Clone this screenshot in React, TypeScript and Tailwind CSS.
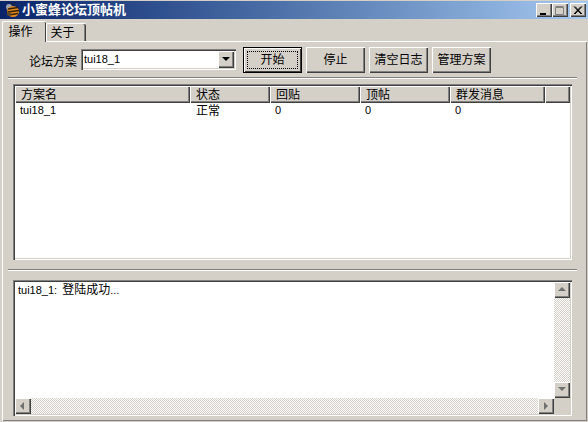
const FONT = "font-['Liberation_Sans','Noto_Sans_CJK_SC',sans-serif]";
const RAISED =
  "shadow-[inset_1px_1px_0_#ffffff,inset_-1px_-1px_0_#404040,inset_-2px_-2px_0_#808080]";
const SUNKEN =
  "shadow-[inset_1px_1px_0_#808080,inset_2px_2px_0_#404040,inset_-1px_-1px_0_#ffffff,inset_-2px_-2px_0_#d4d0c8]";
const CHECKER =
  "bg-[repeating-conic-gradient(#d4d0c8_0_25%,#ffffff_0_50%)] bg-[length:2px_2px]";

const COLUMNS = [
  { label: "方案名", width: "w-[175px]", value: "tui18_1", latin: true },
  { label: "状态", width: "w-[80px]", value: "正常", latin: false },
  { label: "回贴", width: "w-[90px]", value: "0", latin: true },
  { label: "顶帖", width: "w-[90px]", value: "0", latin: true },
  { label: "群发消息", width: "w-[95px]", value: "0", latin: true },
];

function BeeIcon() {
  return (
    <svg width="16" height="16" viewBox="0 0 16 16" className="shrink-0">
      <circle cx="5" cy="5" r="3" fill="#9aa0ac" />
      <ellipse cx="9" cy="9.5" rx="6" ry="5.5" fill="#e08a1e" />
      <path d="M4 7 L14 5.5 M3.5 10 L15 8.5 M4.5 13 L14 11.5" stroke="#3a2208" strokeWidth="1.5" />
      <circle cx="5" cy="12" r="2" fill="#5a4a30" />
      <path d="M7 0.5 L8 3 M11 0.5 L10 3" stroke="#222222" strokeWidth="1" />
    </svg>
  );
}

function CaptionButton({ kind, className }: { kind: "min" | "max" | "close"; className: string }) {
  return (
    <div className={`flex h-[14px] w-[16px] items-center justify-center bg-[#d4d0c8] ${RAISED} ${className}`}>
      <svg width="10" height="9" viewBox="0 0 10 9">
        {kind === "min" && <rect x="1" y="7" width="6" height="2" fill="#000000" />}
        {kind === "max" && (
          <path d="M0.5 1.5 H8.5 V8.5 H0.5 Z M0.5 0.5 H8.5" fill="none" stroke="#808080" />
        )}
        {kind === "close" && <path d="M1 0.5 L8 8 M2 0.5 L9 8 M8 0.5 L1 8 M9 0.5 L2 8" stroke="#000000" />}
      </svg>
    </div>
  );
}

function Button({ label, isDefault }: { label: string; isDefault?: boolean }) {
  if (isDefault) {
    return (
      <button className="flex h-[26px] w-[59px] items-center justify-center bg-[#d4d0c8] text-xs text-black shadow-[inset_0_0_0_1px_#000000,inset_2px_2px_0_#ffffff,inset_-2px_-2px_0_#404040]">
        <span className="flex h-[18px] w-[51px] items-center justify-center border border-dotted border-black">
          {label}
        </span>
      </button>
    );
  }
  return (
    <button className={`flex h-[26px] w-[59px] items-center justify-center bg-[#d4d0c8] text-xs text-black ${RAISED}`}>
      {label}
    </button>
  );
}

function ScrollButton({ dir }: { dir: "up" | "down" | "left" | "right" }) {
  const points = {
    up: "1,6 9,6 5,2",
    down: "1,2 9,2 5,6",
    left: "6,1 6,9 2,5",
    right: "3,1 3,9 7,5",
  }[dir];
  return (
    <div className={`flex h-[16px] w-[16px] shrink-0 items-center justify-center bg-[#d4d0c8] ${RAISED}`}>
      <svg width="10" height="10" viewBox="0 0 10 10">
        <polygon points={points} fill="#707070" />
      </svg>
    </div>
  );
}

export default function App() {
  return (
    <div className={`${FONT} flex h-[422px] w-[588px] flex-col overflow-hidden bg-[#d4d0c8] text-xs text-black`}>
      {/* Title bar */}
      <div className="mt-px flex h-[18px] items-center bg-linear-to-r from-[#0a246a] to-[#a6caf0] pl-[4px] pr-[2px]">
        <BeeIcon />
        <span className="ml-[2px] text-[13px] font-bold text-white">小蜜蜂论坛顶帖机</span>
        <CaptionButton kind="min" className="ml-auto" />
        <CaptionButton kind="max" className="" />
        <CaptionButton kind="close" className="ml-[2px]" />
      </div>

      {/* Tabs */}
      <div className="ml-[2px] mt-px flex h-[21px] items-end">
        <div className="z-10 -mb-px flex h-[21px] w-[44px] items-center justify-center rounded-t-[2px] border-l border-t border-white bg-[#d4d0c8] pr-[8px] shadow-[inset_-1px_0_0_#404040]">
          操作
        </div>
        <div className="flex h-[18px] w-[40px] items-center justify-center rounded-t-[2px] border-l border-t border-white pr-[8px] shadow-[inset_-1px_0_0_#404040,inset_-2px_0_0_#808080]">
          关于
        </div>
      </div>

      {/* Tab page */}
      <div className="mb-px ml-[2px] mr-px flex min-h-0 flex-1 flex-col border-l border-t border-white px-[10px] shadow-[inset_-1px_-1px_0_#808080]">
        <div className="flex h-[29px] items-end pb-[1px]">
          <span className="ml-[16px] w-[52px]">论坛方案</span>
          <div className={`flex h-[21px] w-[155px] items-center bg-white pl-[3px] pr-[2px] ${SUNKEN}`}>
            <span className="text-[11px]">tui18_1</span>
            <div className={`ml-auto flex h-[17px] w-[16px] items-center justify-center bg-[#d4d0c8] ${RAISED}`}>
              <svg width="8" height="5" viewBox="0 0 8 5">
                <polygon points="0,0 8,0 4,4" fill="#000000" />
              </svg>
            </div>
          </div>
          <div className="-mb-[3px] ml-[7px] flex gap-[4px]">
            <Button label="开始" isDefault />
            <Button label="停止" />
            <Button label="清空日志" />
            <Button label="管理方案" />
          </div>
        </div>

        <div className="-ml-[5px] mt-[6px] h-[2px] w-[569px] border-t border-[#808080] bg-white" />

        {/* List view */}
        <div className={`mt-[5px] flex h-[176px] w-[559px] flex-col bg-white p-[2px] ${SUNKEN}`}>
          <div className="flex h-[17px] shrink-0">
            {COLUMNS.map((col) => (
              <div
                key={col.label}
                className={`${col.width} flex shrink-0 items-center bg-[#d4d0c8] pl-[6px] ${RAISED}`}
              >
                {col.label}
              </div>
            ))}
            <div className={`flex-1 bg-[#d4d0c8] ${RAISED}`} />
          </div>
          <div className="flex h-[15px] items-center">
            {COLUMNS.map((col) => (
              <div key={col.label} className={`${col.width} shrink-0 ${col.latin ? "pl-[5px] text-[11px]" : "pl-[6px]"}`}>
                {col.value}
              </div>
            ))}
          </div>
        </div>

        <div className="-ml-[5px] mt-[9px] h-[2px] w-[569px] border-t border-[#808080] bg-white" />

        {/* Log box */}
        <div className={`mt-[9px] flex h-[136px] w-[559px] flex-col p-[2px] ${SUNKEN}`}>
          <div className="flex min-h-0 flex-1">
            <div className="flex-1 bg-white pl-[3px]">
              <span className="mr-[2px] text-[11px]">tui18_1: </span>登陆成功<span className="text-[11px]">...</span>
            </div>
            <div className="flex w-[16px] flex-col">
              <ScrollButton dir="up" />
              <div className={`flex-1 ${CHECKER}`} />
              <ScrollButton dir="down" />
            </div>
          </div>
          <div className="flex h-[16px] pr-[16px]">
            <ScrollButton dir="left" />
            <div className={`flex-1 ${CHECKER}`} />
            <ScrollButton dir="right" />
          </div>
        </div>
      </div>
    </div>
  );
}
